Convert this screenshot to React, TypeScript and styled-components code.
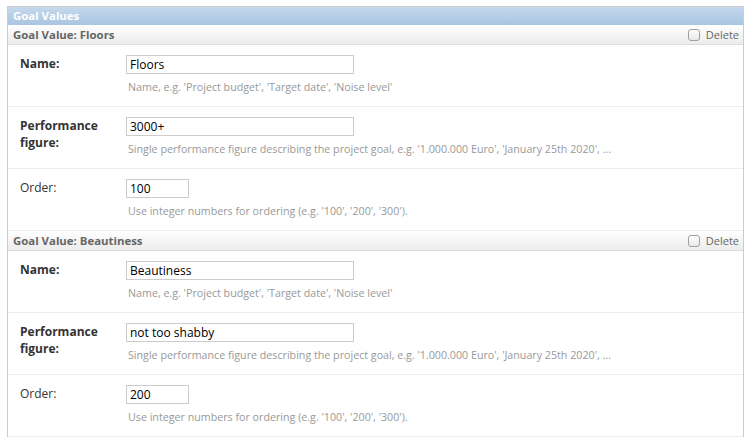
import React from "react";
import styled, { createGlobalStyle } from "styled-components";

const Global = createGlobalStyle`
  html, body { margin: 0; padding: 0; background: #fff; }
  body { font-family: "Open Sans", "Liberation Sans", Arial, sans-serif; font-size: 12px; color: #333; }
`;

const Page = styled.div`
  padding: 6px 10px 0 7px;
`;

const Group = styled.div`
  border: 1px solid #ccc;
  border-bottom: none;
`;

const GroupTitle = styled.h2`
  margin: 0;
  height: 18px;
  line-height: 18px;
  padding: 0 5px;
  font-size: 11.4px;
  font-weight: bold;
  color: #fff;
  background: linear-gradient(#c5d8ec, #aac5e1);
`;

const InlineHeader = styled.h3`
  margin: 0;
  height: 19px;
  display: flex;
  align-items: center;
  justify-content: space-between;
  padding: 0 4px 0 5px;
  font-size: 11.4px;
  font-weight: bold;
  color: #666;
  background: linear-gradient(#ffffff, #ececec);
  border-bottom: 1px solid #ddd;
`;

const DeleteLabel = styled.label`
  display: flex;
  align-items: center;
  gap: 6px;
  font-weight: normal;
  font-size: 11px;
  color: #666;
`;

const Check = styled.input`
  appearance: none;
  margin: 0;
  width: 12px;
  height: 12px;
  border: 1px solid #a0a0a0;
  border-radius: 3px;
  background: linear-gradient(#ffffff, #e8e8e8);
  box-sizing: border-box;
`;

const Row = styled.div`
  display: flex;
  height: 62px;
  box-sizing: border-box;
  padding: 10px 12px 0;
  border-bottom: 1px solid #eee;
`;

const Label = styled.label<{ $required?: boolean }>`
  width: 106px;
  flex: none;
  padding-top: 0;
  line-height: 17px;
  font-size: 12px;
  font-weight: ${(p) => (p.$required ? "bold" : "normal")};
  color: #333;
`;

const Field = styled.div`
  display: flex;
  flex-direction: column;
  align-items: flex-start;
`;

const TextInput = styled.input<{ $short?: boolean }>`
  box-sizing: border-box;
  width: ${(p) => (p.$short ? "63px" : "228px")};
  height: 19px;
  margin: 0;
  padding: 0 3px;
  border: 1px solid #ccc;
  font-family: "Open Sans", "Liberation Sans", Arial, sans-serif;
  font-size: 12px;
  color: #000;
  background: #fff;
  outline: none;
`;

const Help = styled.p`
  margin: 6px 0 0 2px;
  height: 14px;
  line-height: 14px;
  font-size: 10.7px;
  color: #999;
  white-space: nowrap;
`;

type Item = { title: string; name: string; figure: string; order: string };

const items: Item[] = [
  { title: "Floors", name: "Floors", figure: "3000+", order: "100" },
  { title: "Beautiness", name: "Beautiness", figure: "not too shabby", order: "200" },
];

const InlineForm = ({ item }: { item: Item }) => (
  <>
    <InlineHeader>
      <span>Goal Value: {item.title}</span>
      <DeleteLabel>
        <Check type="checkbox" />
        Delete
      </DeleteLabel>
    </InlineHeader>
    <Row>
      <Label $required>Name:</Label>
      <Field>
        <TextInput defaultValue={item.name} />
        <Help>Name, e.g. 'Project budget', 'Target date', 'Noise level'</Help>
      </Field>
    </Row>
    <Row>
      <Label $required>
        Performance
        <br />
        figure:
      </Label>
      <Field>
        <TextInput defaultValue={item.figure} />
        <Help>
          Single performance figure describing the project goal, e.g. '1.000.000 Euro', 'January 25th 2020', ...
        </Help>
      </Field>
    </Row>
    <Row>
      <Label>Order:</Label>
      <Field>
        <TextInput $short defaultValue={item.order} />
        <Help>Use integer numbers for ordering (e.g. '100', '200', '300').</Help>
      </Field>
    </Row>
  </>
);

export default function App() {
  return (
    <Page>
      <Global />
      <Group>
        <GroupTitle>Goal Values</GroupTitle>
        {items.map((it) => (
          <InlineForm key={it.title} item={it} />
        ))}
      </Group>
    </Page>
  );
}
